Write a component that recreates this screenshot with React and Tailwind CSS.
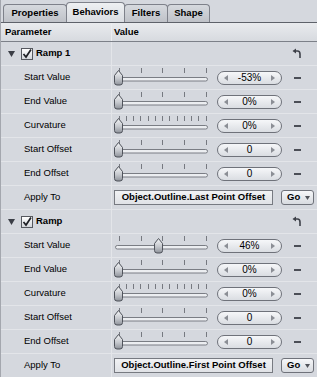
import { useId } from 'react';

const tabs = [
    { name: 'Properties', w: 'w-[64px]' },
    { name: 'Behaviors', w: 'w-[59px]', active: true },
    { name: 'Filters', w: 'w-[44px]' },
    { name: 'Shape', w: 'w-[43px]' },
];

const groups = [
    {
        title: 'Ramp 1',
        rows: [
            { label: 'Start Value', value: '-53%', pos: 0 },
            { label: 'End Value', value: '0%', pos: 0 },
            { label: 'Curvature', value: '0%', pos: 0, fine: true },
            { label: 'Start Offset', value: '0', pos: 0 },
            { label: 'End Offset', value: '0', pos: 0 },
        ],
        applyTo: 'Object.Outline.Last Point Offset',
    },
    {
        title: 'Ramp',
        rows: [
            { label: 'Start Value', value: '46%', pos: 0.46 },
            { label: 'End Value', value: '0%', pos: 0 },
            { label: 'Curvature', value: '0%', pos: 0, fine: true },
            { label: 'Start Offset', value: '0', pos: 0 },
            { label: 'End Offset', value: '0', pos: 0 },
        ],
        applyTo: 'Object.Outline.First Point Offset',
    },
];

// slider drawn as a small control: ticks, groove, thumb
const Slider = ({ pos, fine }) => {
    const id = useId();
    const ticks = fine ? Array.from({ length: 13 }, (_, i) => 4.5 + i * 7.25) : [4.5, 26.5, 48, 69.5, 91.5];
    const cx = 4.5 + pos * 87;
    return (
        <svg width="95" height="23" className="ml-[2px] shrink-0">
            <defs>
                <linearGradient id={id} x1="0" y1="0" x2="0" y2="1">
                    <stop offset="0" stopColor="#f4f5f7" />
                    <stop offset="0.55" stopColor="#c6c9ce" />
                    <stop offset="1" stopColor="#8e929a" />
                </linearGradient>
            </defs>
            {ticks.map((x) => (
                <rect key={x} x={Math.round(x)} y="2" width="1" height="5" fill="#767980" />
            ))}
            <rect x="1.5" y="11.5" width="92" height="3.5" rx="1.75" fill="#eceef1" stroke="#7a7d84" />
            <path
                d={`M${cx} 4.5 L${cx + 4} 9.5 L${cx + 4} 16.5 Q${cx + 4} 19 ${cx + 1.5} 19 L${cx - 1.5} 19 Q${cx - 4} 19 ${cx - 4} 16.5 L${cx - 4} 9.5 Z`}
                fill={`url(#${id})`}
                stroke="#4f535b"
            />
        </svg>
    );
};

const Arrow = ({ dir }) => (
    <svg width="4" height="6" viewBox="0 0 4 6">
        <path d={dir === 'left' ? 'M4 0 L0 3 L4 6 Z' : 'M0 0 L4 3 L0 6 Z'} fill="#8b8e95" />
    </svg>
);

const ValueField = ({ value }) => (
    <div className="ml-[8px] w-[65px] h-[14px] rounded-full border border-[#6f727a] bg-gradient-to-b from-[#f6f7f9] to-[#dadde2] flex items-center justify-between px-[6px]">
        <Arrow dir="left" />
        <span className="text-[10px] leading-none text-black">{value}</span>
        <Arrow dir="right" />
    </div>
);

const Minus = () => <div className="ml-[12px] w-[7px] h-[2px] bg-[#4b4e56]" />;

const Row = ({ children, right }) => (
    <div className="h-[24px] grid grid-cols-[111px_1fr] border-b border-[#e3e5e9]">
        <div className="flex items-center border-r border-[#e3e5e9]">{children}</div>
        <div className="flex items-center">{right}</div>
    </div>
);

const UndoIcon = () => (
    <svg width="10" height="11" viewBox="0 0 10 11">
        <path d="M0.5 3 L4 0.5 L4 5.5 Z" fill="#3e4149" />
        <path d="M3.5 3 H5.5 Q8 3 8 6 V10" fill="none" stroke="#3e4149" strokeWidth="1.6" />
    </svg>
);

const Group = ({ group }) => (
    <>
        <Row
            right={
                <div className="flex-1 flex justify-end pr-[15px]">
                    <UndoIcon />
                </div>
            }
        >
            <svg width="7" height="6" viewBox="0 0 7 6" className="ml-[7px]">
                <path d="M0 0 H7 L3.5 6 Z" fill="#3b3e46" />
            </svg>
            <div className="ml-[6px] w-[12px] h-[12px] border border-[#55585f] bg-gradient-to-b from-white to-[#d3d6db] flex items-center justify-center">
                <svg width="10" height="10" viewBox="0 0 10 10">
                    <path d="M1.5 5 L4 8 L9 0.5" fill="none" stroke="#1e2026" strokeWidth="1.7" />
                </svg>
            </div>
            <span className="ml-[3px] text-[9.5px] font-bold text-black">{group.title}</span>
        </Row>
        {group.rows.map((r, i) => (
            <Row
                key={i}
                right={
                    <>
                        <Slider pos={r.pos} fine={r.fine} />
                        <ValueField value={r.value} />
                        <Minus />
                    </>
                }
            >
                <span className="pl-[23px] text-[9.5px] text-black">{r.label}</span>
            </Row>
        ))}
        <Row
            right={
                <>
                    <div className="ml-[2px] w-[159px] h-[15px] border border-[#777a81] bg-gradient-to-b from-[#f1f2f4] to-[#e0e2e6] flex items-center justify-center">
                        <span className="text-[9.5px] font-bold text-black whitespace-nowrap">{group.applyTo}</span>
                    </div>
                    <div className="ml-[8px] w-[33px] h-[15px] rounded-[3px] border border-[#6f727a] bg-gradient-to-b from-[#f6f7f9] to-[#d8dbe0] flex items-center pl-[5px] gap-[5px]">
                        <span className="text-[9.5px] font-bold text-black">Go</span>
                        <svg width="5" height="4" viewBox="0 0 5 4">
                            <path d="M0 0 H5 L2.5 4 Z" fill="#50535a" />
                        </svg>
                    </div>
                </>
            }
        >
            <span className="pl-[23px] text-[9.5px] text-black">Apply To</span>
        </Row>
    </>
);

export default function App() {
    return (
        <div className="w-[317px] h-[377px] overflow-hidden bg-[#d5d8de] border-l border-[#a4a7ae] font-['Liberation_Sans',Arial,sans-serif]">
            {/* tabs */}
            <div className="h-[23px] flex items-end pl-[2px] border-b border-[#5e626a]">
                {tabs.map((t) => (
                    <div
                        key={t.name}
                        className={`${t.w} -ml-px first:ml-0 flex items-center justify-center rounded-t-[4px] border-x border-t border-[#7e818a] text-[9.5px] font-bold text-black ${
                            t.active
                                ? 'h-[20px] bg-gradient-to-b from-[#eef0f2] to-[#d9dce1]'
                                : 'h-[18px] bg-gradient-to-b from-[#d6d9de] to-[#bfc2c8]'
                        }`}
                    >
                        {t.name}
                    </div>
                ))}
            </div>
            {/* header */}
            <div className="h-[19px] grid grid-cols-[111px_1fr] border-b border-[#7c8088] bg-gradient-to-b from-[#e9ebee] to-[#d7dadf]">
                <div className="flex items-center pl-[4px] border-r border-[#eceef1] text-[9.5px] font-bold text-black">Parameter</div>
                <div className="flex items-center pl-[2px] text-[9.5px] font-bold text-black">Value</div>
            </div>
            {groups.map((g) => (
                <Group key={g.title} group={g} />
            ))}
        </div>
    );
}
